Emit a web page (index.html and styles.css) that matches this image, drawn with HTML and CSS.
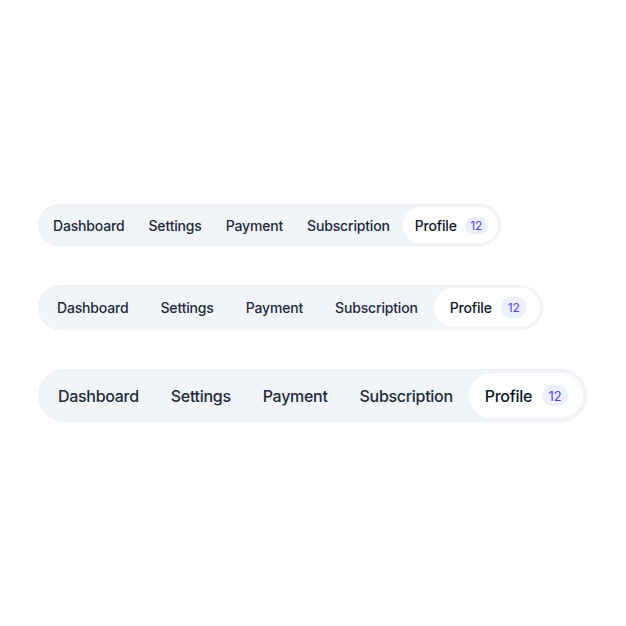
FILE: index.html
```html
<!DOCTYPE html>
<html lang="en">
<head>
<meta charset="utf-8">
<title>Tabs</title>
<link rel="stylesheet" href="styles.css">
</head>
<body>
<div class="page">
  <nav class="tabs sm">
    <a class="tab">Dashboard</a>
    <a class="tab">Settings</a>
    <a class="tab">Payment</a>
    <a class="tab">Subscription</a>
    <a class="tab active">Profile <span class="badge">12</span></a>
  </nav>
  <nav class="tabs md">
    <a class="tab">Dashboard</a>
    <a class="tab">Settings</a>
    <a class="tab">Payment</a>
    <a class="tab">Subscription</a>
    <a class="tab active">Profile <span class="badge">12</span></a>
  </nav>
  <nav class="tabs lg">
    <a class="tab">Dashboard</a>
    <a class="tab">Settings</a>
    <a class="tab">Payment</a>
    <a class="tab">Subscription</a>
    <a class="tab active">Profile <span class="badge">12</span></a>
  </nav>
</div>
</body>
</html>
```
FILE: styles.css
```css
html, body {
  margin: 0;
  padding: 0;
  background: #ffffff;
}

body {
  font-family: Inter, "Noto Sans", "Liberation Sans", sans-serif;
  color: #1e293b;
}

.page {
  display: flex;
  flex-direction: column;
  align-items: flex-start;
  gap: 39px;
  padding: 204px 0 0 38px;
}

.tabs {
  display: inline-flex;
  align-items: center;
  background: #f1f5f9;
  border: 1px solid #edf1f6;
  border-radius: 999px;
}

.tab {
  display: flex;
  align-items: center;
  border-radius: 999px;
  font-weight: 500;
  color: #1e293b;
  white-space: nowrap;
}

.tab.active {
  background: #ffffff;
  color: #0f172a;
}

.badge {
  display: inline-flex;
  align-items: center;
  justify-content: center;
  background: #eceffd;
  color: #4f46e5;
  border-radius: 999px;
  font-weight: 400;
  letter-spacing: 0;
}

/* small */
.tabs.sm { padding: 2px; }
.tabs.sm .tab { height: 36px; padding: 0 12px; font-size: 14px; letter-spacing: -0.17px; }
.tabs.sm .tab.active { padding-right: 10px; margin-left: 1px; }
.tabs.sm .badge { width: 23px; height: 17px; font-size: 12px; margin-left: 8px; }

/* medium */
.tabs.md { padding: 2px; }
.tabs.md .tab { height: 39px; padding: 0 16px; font-size: 14px; letter-spacing: -0.17px; }
.tabs.md .tab.active { padding-right: 13px; }
.tabs.md .badge { width: 26px; height: 21px; font-size: 12px; margin-left: 9px; }

/* large */
.tabs.lg { padding: 3px; }
.tabs.lg .tab { height: 45px; padding: 0 16px; font-size: 16px; letter-spacing: -0.3px; }
.tabs.lg .tab.active { padding-right: 15px; }
.tabs.lg .badge { width: 26px; height: 21px; font-size: 13px; margin-left: 10px; }
```
